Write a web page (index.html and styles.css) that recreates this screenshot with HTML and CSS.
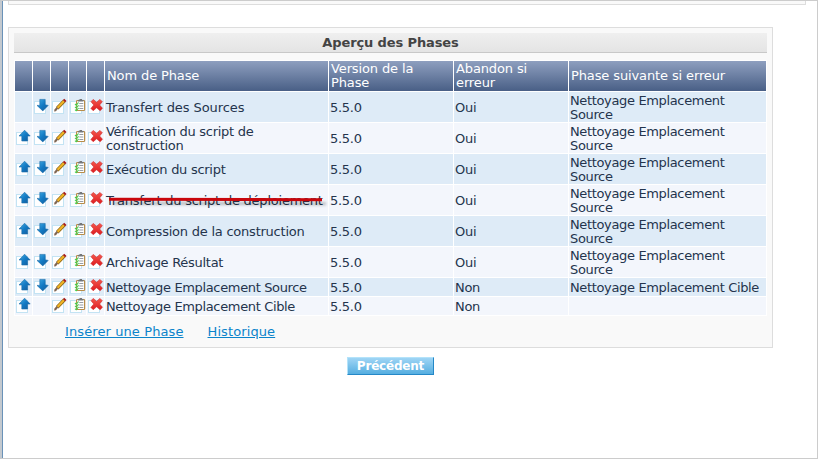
FILE: index.html
```html
<!DOCTYPE html>
<html lang="fr">
<head>
<meta charset="utf-8">
<title>Aperçu des Phases</title>
<link rel="stylesheet" href="styles.css">
</head>
<body>
<svg class="defs" width="0" height="0" aria-hidden="true">
  <defs>
    <linearGradient id="blue" x1="0" y1="0" x2="1" y2="1"><stop offset="0" stop-color="#46aee4"/><stop offset=".5" stop-color="#127ac4"/><stop offset="1" stop-color="#155a98"/></linearGradient>
    <linearGradient id="red" x1="0" y1="0" x2="0" y2="1"><stop offset="0" stop-color="#f4564c"/><stop offset="1" stop-color="#dd1c20"/></linearGradient>
    <g id="box"><rect x="1.5" y="3.5" width="11" height="12" fill="#fff" stroke="#c3e3f3"/></g>
    <symbol id="up" viewBox="0 0 17 18"><use href="#box"/><path d="M9.6 1.2 15.2 7h-2.6v5H6.8V7H4z" fill="url(#blue)" stroke="#1b6ba9" stroke-width=".6"/></symbol>
    <symbol id="down" viewBox="0 0 17 18"><use href="#box"/><path d="M6.8 1.4h5.4v5.4l3 .6-5.4 5.5-5.8-5.5h2.8z" fill="url(#blue)" stroke="#1b6ba9" stroke-width=".6"/></symbol>
    <symbol id="edit" viewBox="0 0 17 18"><use href="#box"/><path d="m6.2 10.3 7-7.3" stroke="#8a6418" stroke-width="3.4"/><path d="m6.4 10 6.6-7" stroke="#f2b424" stroke-width="2"/><path d="m13 3.2 1.4-1.4" stroke="#a61b1b" stroke-width="3.2"/><path d="m5.6 9 1.6 1.6-2.3 2.6-1.8.4.4-2z" fill="#806754"/></symbol>
    <symbol id="check" viewBox="0 0 17 18"><use href="#box"/><rect x="7.6" y="2.5" width="8" height="10" rx=".8" fill="#fff" stroke="#b88d49" stroke-width="1.2"/><path d="M9 2.7h5.4" stroke="#73777b" stroke-width="1.6"/><path d="M10.5 1.5h2.5" stroke="#777"/><path d="M10.3 5.5h4m-4 2.5h4m-4 2.5h4" stroke="#8b9197" stroke-width=".9"/><path d="m6 6 1.2 1.2L9.6 4.5M6 8.8 7.2 10l2.4-2.7M6 11.6l1.2 1.2L9.6 10" fill="none" stroke="#42d04d" stroke-width="1.1"/></symbol>
    <symbol id="delete" viewBox="0 0 17 18"><use href="#box"/><path d="m6.2 1.4 3.4 2.8L13 1.4l2.3 2.3-2.7 3.3 2.9 3.3-2.4 2.4-3.5-2.9-3.4 2.9-2.3-2.3 2.9-3.4-2.8-3.3z" fill="url(#red)" stroke="#cf2b2b" stroke-width=".6"/></symbol>
  </defs>
</svg>
<div class="page">
  <div class="previous-panel"></div>
  <section class="panel">
    <h1 class="title">Aperçu des Phases</h1>
    <div class="phases">
      <div class="row head"><div></div><div></div><div></div><div></div><div></div><div>Nom de Phase</div><div>Version de la<br>Phase</div><div>Abandon si<br>erreur</div><div>Phase suivante si erreur</div></div>
      <div class="row odd"><div></div><div><svg><use href="#down"/></svg></div><div><svg><use href="#edit"/></svg></div><div><svg><use href="#check"/></svg></div><div><svg><use href="#delete"/></svg></div><div class="loose">Transfert des Sources</div><div>5.5.0</div><div>Oui</div><div>Nettoyage Emplacement<br>Source</div></div>
      <div class="row"><div><svg><use href="#up"/></svg></div><div><svg><use href="#down"/></svg></div><div><svg><use href="#edit"/></svg></div><div><svg><use href="#check"/></svg></div><div><svg><use href="#delete"/></svg></div><div>Vérification du script de<br>construction</div><div>5.5.0</div><div>Oui</div><div>Nettoyage Emplacement<br>Source</div></div>
      <div class="row odd"><div><svg><use href="#up"/></svg></div><div><svg><use href="#down"/></svg></div><div><svg><use href="#edit"/></svg></div><div><svg><use href="#check"/></svg></div><div><svg><use href="#delete"/></svg></div><div>Exécution du script</div><div>5.5.0</div><div>Oui</div><div>Nettoyage Emplacement<br>Source</div></div>
      <div class="row"><div><svg><use href="#up"/></svg></div><div><svg><use href="#down"/></svg></div><div><svg><use href="#edit"/></svg></div><div><svg><use href="#check"/></svg></div><div><svg><use href="#delete"/></svg></div><div class="struck">Transfert du script de déploiement<i class="strike"></i></div><div>5.5.0</div><div>Oui</div><div>Nettoyage Emplacement<br>Source</div></div>
      <div class="row odd"><div><svg><use href="#up"/></svg></div><div><svg><use href="#down"/></svg></div><div><svg><use href="#edit"/></svg></div><div><svg><use href="#check"/></svg></div><div><svg><use href="#delete"/></svg></div><div class="medium">Compression de la construction</div><div>5.5.0</div><div>Oui</div><div>Nettoyage Emplacement<br>Source</div></div>
      <div class="row"><div><svg><use href="#up"/></svg></div><div><svg><use href="#down"/></svg></div><div><svg><use href="#edit"/></svg></div><div><svg><use href="#check"/></svg></div><div><svg><use href="#delete"/></svg></div><div>Archivage Résultat</div><div>5.5.0</div><div>Oui</div><div>Nettoyage Emplacement<br>Source</div></div>
      <div class="row odd short"><div><svg><use href="#up"/></svg></div><div><svg><use href="#down"/></svg></div><div><svg><use href="#edit"/></svg></div><div><svg><use href="#check"/></svg></div><div><svg><use href="#delete"/></svg></div><div class="tight">Nettoyage Emplacement Source</div><div>5.5.0</div><div>Non</div><div>Nettoyage Emplacement Cible</div></div>
      <div class="row short"><div><svg><use href="#up"/></svg></div><div></div><div><svg><use href="#edit"/></svg></div><div><svg><use href="#check"/></svg></div><div><svg><use href="#delete"/></svg></div><div class="tight">Nettoyage Emplacement Cible</div><div>5.5.0</div><div>Non</div><div></div></div>
    </div>
    <nav class="links"><a href="#">Insérer une Phase</a><a href="#">Historique</a></nav>
  </section>
  <div class="actions"><button class="back" type="button">Précédent</button></div>
</div>
</body>
</html>
```
FILE: styles.css
```css
* { box-sizing: border-box; }
body {
  margin: 0;
  height: 459px;
  overflow: hidden;
  background: #fff;
  font: 13px/14px Verdana, "DejaVu Sans", sans-serif;
  color: #24344d;
}
.defs { position: absolute; }
.page {
  height: 459px;
  padding-left: 5px;
  border: 1px solid #ccc;
  border-width: 1px 1px 1px 2px;
  border-left-color: #c3c9cf;
  box-shadow: inset 1px 0 #6a92b8;
}
.previous-panel {
  width: 798px;
  height: 4px;
  margin-left: 1px;
  border: 1px solid #ddd;
  border-top: 0;
  background: #f9f9f9;
}
.panel {
  width: 765px;
  height: 321px;
  margin: 22px 0 0 1px;
  padding: 5px;
  border: 1px solid #ddd;
  background: #f9f9f9;
}
.title {
  height: 20px;
  margin: 0;
  border-bottom: 1px solid #c8c8c8;
  background: linear-gradient(#efefef, #e4e4e4);
  color: #444;
  font-size: 13px;
  letter-spacing: -.12px;
  line-height: 19px;
  text-align: center;
}
.phases {
  display: grid;
  gap: 1px;
  margin-top: 7px;
  padding: 1px;
  background: #fff;
}
.row {
  display: grid;
  grid-template-columns: repeat(5, 17px) 223px 124px 114px 197px;
  gap: 1px;
  height: 30px;
}
.row > div {
  display: flex;
  align-items: center;
  padding-left: 1px;
  padding-top: 1px;
  background: #f3f6fc;
  letter-spacing: -.28px;
  white-space: nowrap;
}
.row.odd > div { background: #deebf7; }
.row > div:nth-child(9),
.row > .tight { letter-spacing: -.35px; }
.row > .medium,
.row > .struck { letter-spacing: -.23px; }
.row > .loose { letter-spacing: -.08px; }
.row.short { height: 18px; }
.row > div:nth-child(-n+5) { padding: 0; }
.row.head > div {
  padding: 0 0 0 2px;
  background: linear-gradient(#8e9fbf, #495f86);
  color: #fff;
  letter-spacing: -.12px;
}
.row svg {
  display: block;
  flex: none;
  width: 17px;
  height: 18px;
}
.row > .struck { position: relative; }
.strike {
  position: absolute;
  left: 4px;
  top: 13px;
  width: 213px;
  height: 3px;
  background: #c9060c;
  box-shadow: 4px 4px 3px rgba(0, 0, 0, .25);
  transform: rotate(.15deg);
}
.links {
  display: flex;
  gap: 24px;
  margin: 9px 0 0 51px;
  letter-spacing: .1px;
}
.links a { color: #0b84cb; }
.actions { padding: 9px 0 0 340px; }
.back {
  display: block;
  width: 87px;
  height: 18px;
  padding: 0;
  border: 1px solid;
  border-color: #b4e3fa #2488c7 #2488c7 #b4e3fa;
  background: linear-gradient(#9fd5f5, #55aee0);
  color: #fff;
  font: bold 12px/17px Verdana, "DejaVu Sans", sans-serif;
  letter-spacing: -.2px;
}
```
